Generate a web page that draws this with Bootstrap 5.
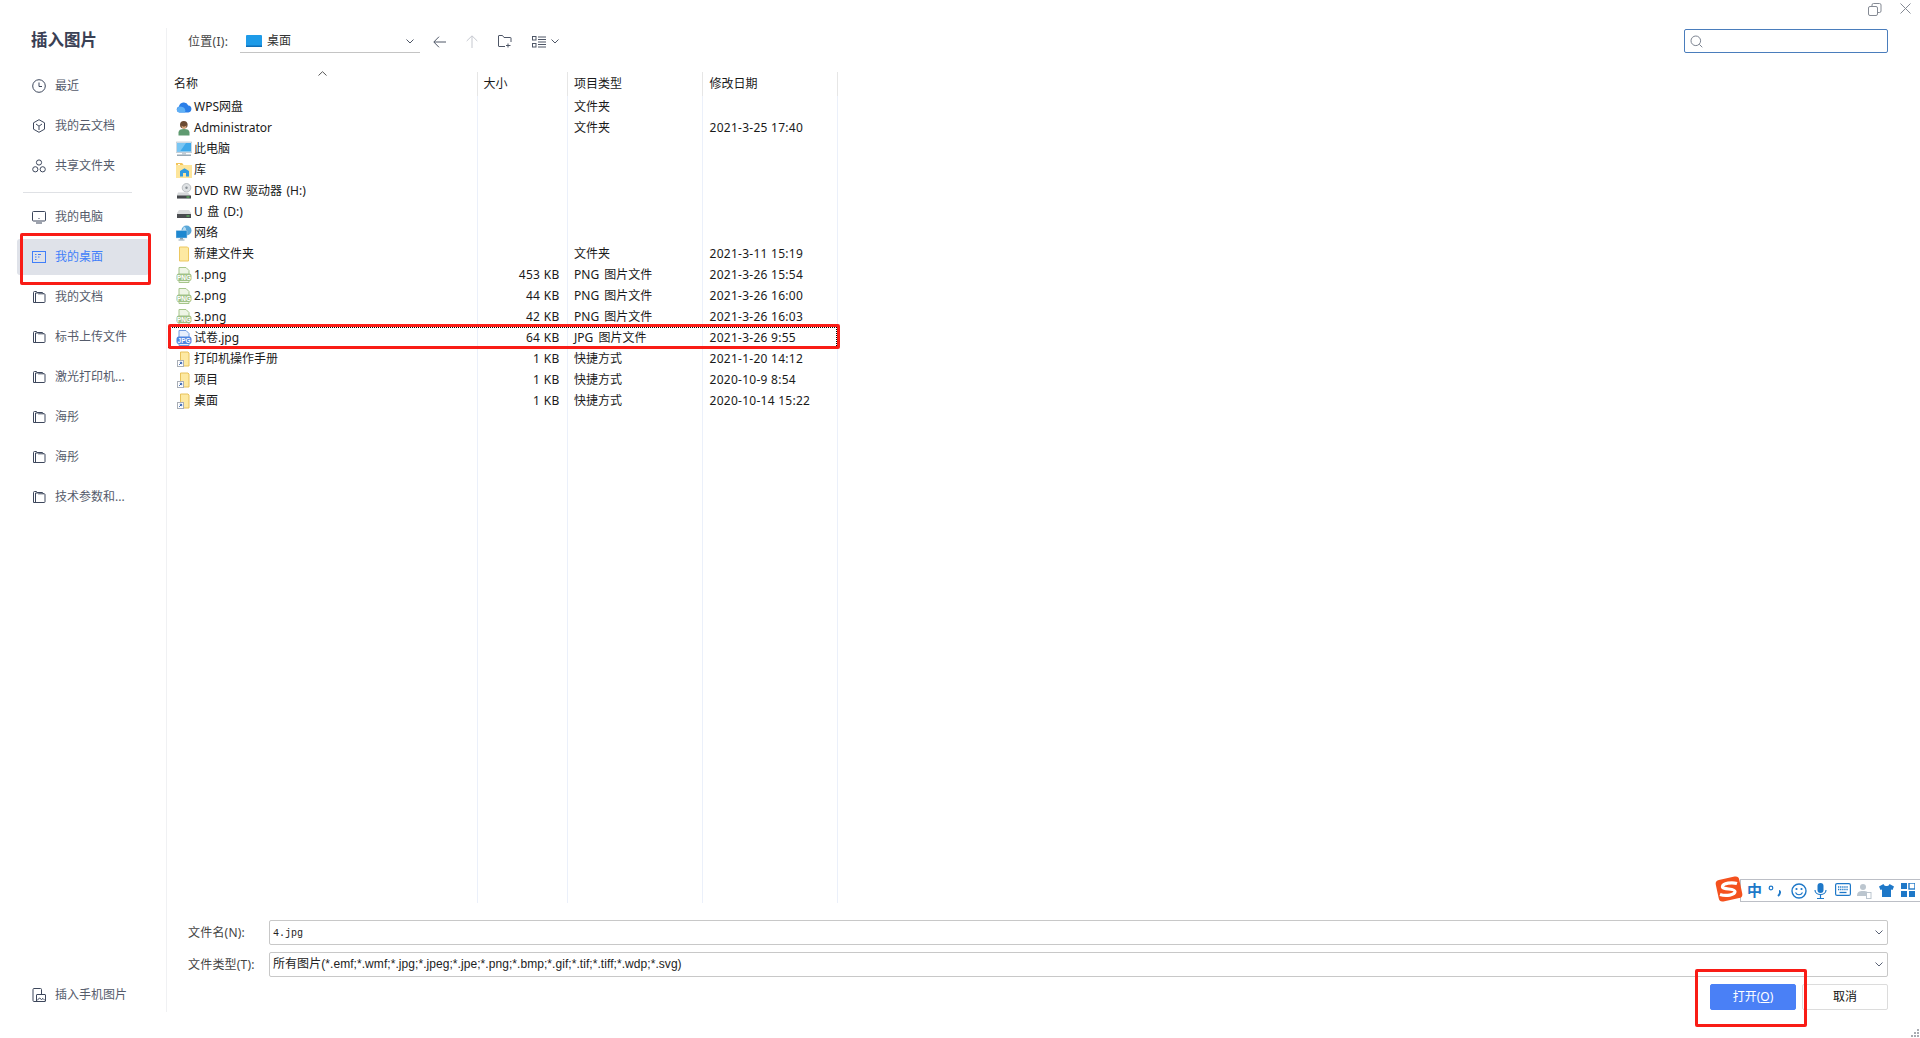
<!DOCTYPE html>
<html lang="zh-CN">
<head>
<meta charset="utf-8">
<title>插入图片</title>
<link rel="stylesheet" href="https://cdn.jsdelivr.net/npm/bootstrap@5.3.0/dist/css/bootstrap.min.css">
<style>
html,body{height:1038px;overflow:hidden}
body{background:#fff;font:12px/1.3 "Noto Sans","Noto Sans CJK SC",sans-serif;color:#1a1a1a}
.dlg{height:1038px;padding:28px 0 26px;position:relative}
.side{width:167px;flex:none;border-right:1px solid #f0f1f3}
.side-title{font-size:16.500px;font-weight:700;line-height:24px;color:#3a4054;padding-left:31px;margin:0 0 16px}
.side-item{height:36px;margin:0 17px 4px;width:132px;padding-left:15px;gap:9px;color:#555b6b;border-radius:3px;text-decoration:none;flex:none}
.side-item svg{width:14px;height:14px;fill:none;stroke:#3d475c;stroke-width:1;flex:none}
.side-item.sel{background:#dfe2e9;color:#417ff9}
.side-item.sel svg{stroke:#417ff9}
.side-item.phone{margin-bottom:-1px}
.side-rule{height:1px;background:#dfe1e5;margin:4px 34px 6px 23px;flex:none}
.main{min-width:0}
.tools{height:25px;padding-top:2px;margin:0 32px 19px 21px;flex:none;color:#444}
.loc-label{width:52px;letter-spacing:.3px}
.loc-box{width:180px;height:23px;border-bottom:1px solid #c4c4c4;padding:0 6px;gap:5px;color:#333}
.tool-ic{fill:none;stroke:#4e5666;stroke-width:1;flex:none}
.search{margin-left:auto;width:204px;height:24px;border:1px solid #4a7dbc;border-radius:2px;padding-left:5px;margin-top:-1px;align-self:flex-start}
.filewrap{height:831px;flex:none;padding-left:1px;position:relative}
.files{width:669px;table-layout:fixed;margin:0;--bs-table-bg:transparent;--bs-table-color:#1a1a1a;font-size:12px}
.files th,.files td{padding:0;font-weight:400;border:0;white-space:nowrap;vertical-align:middle;line-height:21px}
.files th{height:24px;padding-left:7px;border-right:1px solid #e6e6e6;position:relative;line-height:22px}
.files td{height:21px;padding-left:7px;border-right:1px solid #ebf0fa}
.files th:first-child{padding-left:6px}
.files th:nth-child(2){padding-left:6px}
.files th:nth-child(3),.files td:nth-child(3){padding-left:6.500px}
.files td:nth-child(3){word-spacing:2px}
.files td:nth-child(4){letter-spacing:.27px}
.files td:first-child{padding-left:8px}
.files td.sz{text-align:right;padding:0 7px 0 0;letter-spacing:.3px}
.files td.nm>span{display:flex;align-items:center;gap:2px;word-spacing:1.300px}
.files td.nm svg{width:16px;height:16px;flex:none}
.files tr.focusrow{outline:1px dotted #000;outline-offset:-1px}
.files tr.filler td{height:492px}
.sortup{position:absolute;left:150px;top:-1px;width:9px;height:5px;fill:none;stroke:#555;stroke-width:1}
.foot{margin:17px 32px 0 21px;gap:7px;color:#444}
.foot-label{width:81px;flex:none;padding-top:1px;letter-spacing:.2px}
.fld{height:25px;border:1px solid #c8c8c8;border-radius:2px;padding:1px 3px 0;color:#222;flex:1;min-width:0;font-family:"Liberation Sans","Noto Sans CJK SC",sans-serif;letter-spacing:.06px;position:relative;background:#fff}
.fld.mono{font-family:"Liberation Mono",monospace;font-size:10px;letter-spacing:0}
.fld svg{position:absolute;right:4px;top:9px;width:8px;height:5px;fill:none;stroke:#5a6275;stroke-width:1}
.act{height:26px;gap:6px}
.btn-open{--bs-btn-bg:#4a80f6;--bs-btn-border-color:#4a80f6;--bs-btn-color:#fff;--bs-btn-hover-bg:#4a80f6;--bs-btn-hover-color:#fff;--bs-btn-padding-y:0;--bs-btn-padding-x:0;--bs-btn-font-size:12px;--bs-btn-border-radius:2px;width:86px;height:26px}
.btn-no{--bs-btn-bg:#fff;--bs-btn-border-color:#dcdcdc;--bs-btn-color:#111;--bs-btn-padding-y:0;--bs-btn-padding-x:0;--bs-btn-font-size:12px;--bs-btn-border-radius:2px;width:86px;height:26px}
.mark-box{position:absolute;border:3px solid #f91c16;border-radius:2px;pointer-events:none}
.mk-side{left:20px;top:233px;width:131px;height:52px}
.mk-row{left:168px;top:324px;width:672px;height:25px}
.mk-open{left:1695px;top:969px;width:112px;height:58px}
.winbtns{position:absolute;top:3px;right:9px;gap:17px}
.winbtns svg{fill:none;stroke:#858a94;stroke-width:1}
.ime{position:absolute;left:1715px;top:875px;width:205px;height:29px}
.ime-strip{position:absolute;left:25px;top:4px;right:0;height:23px;background:#fff;border:1px solid #bcbfc6;border-right:0}
.ime-strip>*{position:absolute;top:3px}
.ime-zh{font:700 15px/17px "Noto Sans CJK SC",sans-serif;color:#1e78c8;left:6px;top:1px}
.grip{position:absolute;right:1px;bottom:1px;width:8px;height:8px}
</style>
</head>
<body>
<svg width="0" height="0" class="position-absolute">
<defs>
<symbol id="i-folder" viewBox="0 0 14 14"><path d="M1.500 12.500V2.500a1 1 0 0 1 1-1h2l1 1.500v-.5h5l1 1.500M1.500 12.500h10.800a.7.7 0 0 0 .7-.7V4.500a.7.700 0 0 0-.7-.7H6.500L5.500 3H3.500v9.500"/></symbol>
<symbol id="f-folder" viewBox="0 0 16 16"><path d="M3.500 1h8l1 1v13h-9z" fill="#fde9a2" stroke="#edc861"/><path d="M12.500 3v12" stroke="#edc861"/></symbol>
<symbol id="f-short" viewBox="0 0 16 16"><path d="M4.500 1h7.500l1 1v13H4.500z" fill="#fde9a2" stroke="#e8c25a"/><rect x="1.500" y="9.500" width="6" height="6" fill="#fff" stroke="#a9aeb6"/><path d="M3.200 13.800l2.300-2.300M3.800 11.300h1.900v1.900" fill="none" stroke="#2f5fae"/></symbol>
<symbol id="f-png" viewBox="0 0 16 16"><path d="M3 .5h7l3 3V8H3z" fill="#eef5e6" stroke="#a6c58a"/><path d="M3 14v1.500h10V14" fill="#eef5e6" stroke="#a6c58a"/><rect x=".5" y="6.500" width="15" height="7.500" rx="2.500" fill="#9fc187"/><text x="8" y="12.500" text-anchor="middle" font-size="6.400" font-weight="700" fill="#fff" font-family="Liberation Sans,sans-serif">PNG</text></symbol>
<symbol id="f-jpg" viewBox="0 0 16 16"><path d="M3 .5h7l3 3V8H3z" fill="#e7effc" stroke="#6f9ae0"/><path d="M3 14v1.500h10V14" fill="#e7effc" stroke="#6f9ae0"/><rect x=".5" y="6.500" width="15" height="7.500" rx="2.500" fill="#4f86e0"/><text x="8" y="12.500" text-anchor="middle" font-size="6.400" font-weight="700" fill="#fff" font-family="Liberation Sans,sans-serif">JPG</text></symbol>
<symbol id="c-down" viewBox="0 0 8 5"><path d="M.5.500L4 4l3.500-3.500"/></symbol>
</defs>
</svg>

<div class="dlg d-flex">
  <aside class="side d-flex flex-column">
    <h1 class="side-title">插入图片</h1>
    <a class="side-item d-flex align-items-center"><svg viewBox="0 0 14 14"><circle cx="7" cy="7" r="6.300"/><path d="M7 3.500V7.500h3"/></svg>最近</a>
    <a class="side-item d-flex align-items-center"><svg viewBox="0 0 14 14"><path d="M7 .7l5.500 3.100v6.400L7 13.300 1.500 10.200V3.800zM4 5l3 2.200L10 5M7 7.200V11"/></svg>我的云文档</a>
    <a class="side-item d-flex align-items-center"><svg viewBox="0 0 14 14"><circle cx="7" cy="3.500" r="2.600"/><circle cx="3.300" cy="10.300" r="2.600"/><circle cx="10.700" cy="10.300" r="2.600"/></svg>共享文件夹</a>
    <div class="side-rule"></div>
    <a class="side-item d-flex align-items-center"><svg viewBox="0 0 14 14"><rect x=".5" y="1.500" width="13" height="9.500" rx="1"/><path d="M4 13h6M6.500 8.500h1"/></svg>我的电脑</a>
    <a class="side-item sel d-flex align-items-center"><svg viewBox="0 0 14 14"><rect x=".5" y="1.500" width="13" height="11"/><path d="M3 4.500h1.500M6 4.500h3M3 7h1.500M6 7h1.500M3 9.500h1.500"/></svg>我的桌面</a>
    <a class="side-item d-flex align-items-center"><svg><use href="#i-folder"/></svg>我的文档</a>
    <a class="side-item d-flex align-items-center"><svg><use href="#i-folder"/></svg>标书上传文件</a>
    <a class="side-item d-flex align-items-center"><svg><use href="#i-folder"/></svg>激光打印机...</a>
    <a class="side-item d-flex align-items-center"><svg><use href="#i-folder"/></svg>海彤</a>
    <a class="side-item d-flex align-items-center"><svg><use href="#i-folder"/></svg>海彤</a>
    <a class="side-item d-flex align-items-center"><svg><use href="#i-folder"/></svg>技术参数和...</a>
    <a class="side-item phone d-flex align-items-center mt-auto"><svg viewBox="0 0 14 14"><path d="M7.500 13.500H2a1 1 0 0 1-1-1v-11a1 1 0 0 1 1-1h6.500a1 1 0 0 1 1 1V6"/><rect x="4.500" y="6.500" width="9" height="7" rx=".5"/><path d="M5 12.500l2.500-2.500 2 1.500 1.500-1 2 2"/></svg>插入手机图片</a>
  </aside>

  <main class="main flex-grow-1 d-flex flex-column">
    <div class="tools d-flex align-items-center">
      <span class="loc-label">位置(I):</span>
      <div class="loc-box d-flex align-items-center">
        <svg width="16" height="12" viewBox="0 0 16 12"><rect width="16" height="12" rx="1" fill="#1e9be8"/><rect y="10.500" width="16" height="1.500" fill="#0f6fb8"/></svg>
        <span>桌面</span>
        <svg class="tool-ic ms-auto" width="8" height="5"><use href="#c-down"/></svg>
      </div>
      <svg class="tool-ic" style="margin-left:13px" width="13" height="12" viewBox="0 0 13 12"><path d="M13 6H1M6 .7L.8 6 6 11.300"/></svg>
      <svg class="tool-ic" style="margin-left:20px;stroke:#c5c8cf" width="12" height="13" viewBox="0 0 12 13"><path d="M6 13V1M.7 6L6 .8 11.300 6"/></svg>
      <svg class="tool-ic" style="margin-left:20px" width="14" height="13" viewBox="0 0 14 13"><path d="M7 11.500H1a.5.500 0 0 1-.5-.5V1A.5.500 0 0 1 1 .5h3.500l1.500 2h6.500a.5.500 0 0 1 .5.500v4M10 8.500v4M8 10.500h4.500"/></svg>
      <svg class="tool-ic" style="margin-left:20px" width="14" height="12" viewBox="0 0 14 12"><rect x=".5" y=".5" width="3.500" height="3.500"/><rect x=".5" y="7.500" width="3.500" height="3.500"/><path d="M6 1h8M6 3.500h8M6 6h8M6 8.500h8M6 11h8" /></svg>
      <svg class="tool-ic" style="margin-left:5px" width="8" height="5"><use href="#c-down"/></svg>
      <div class="search d-flex align-items-center">
        <svg class="tool-ic" style="stroke:#7d8491" width="13" height="13" viewBox="0 0 13 13"><circle cx="5.800" cy="5.800" r="4.800"/><path d="M9.300 9.300l3 3"/></svg>
      </div>
    </div>

    <div class="filewrap">
      <table class="table files">
        <colgroup><col style="width:309px"><col style="width:90px"><col style="width:135px"><col style="width:135px"></colgroup>
        <thead>
          <tr><th>名称<svg class="sortup" viewBox="0 0 9 5"><path d="M.5 4.500L4.500.700l4 3.800"/></svg></th><th>大小</th><th>项目类型</th><th>修改日期</th></tr>
        </thead>
        <tbody>
          <tr><td class="nm"><span><svg viewBox="0 0 16 16"><path d="M3.500 13.500a3 3 0 0 1-.6-5.900 5 5 0 0 1 9.400-1.200 3.600 3.600 0 0 1 .2 7.100z" fill="#2b7fe8"/><path d="M1 10.500a3 3 0 0 1 4-2.700 4 4 0 0 1 4 5.700H3.500A2.500 2.500 0 0 1 1 10.500z" fill="#5fb0f5"/></svg>WPS网盘</span></td><td></td><td>文件夹</td><td></td></tr>
          <tr><td class="nm"><span><svg viewBox="0 0 16 16"><path d="M2.500 15.500v-3c0-2.500 2-3.500 5.500-3.500s5.500 1 5.500 3.500v3z" fill="#5f9a70"/><circle cx="7.800" cy="4.800" r="3.800" fill="#6a4a32"/><path d="M5.500 5.500c1 1.500 3.500 1.500 5 0-.2 2.300-1.300 3.500-2.500 3.500S5.700 7.800 5.500 5.500z" fill="#d9a77d"/></svg>Administrator</span></td><td></td><td>文件夹</td><td>2021-3-25 17:40</td></tr>
          <tr><td class="nm"><span><svg viewBox="0 0 16 16"><rect y="1" width="16" height="10.500" rx=".5" fill="#dfeaf3" stroke="#98a9b5" stroke-width=".5"/><rect x="1" y="2" width="14" height="8.500" fill="#3fa9ea"/><path d="M1 2h9L4 10.500H1z" fill="#79c6f3"/><path d="M6 11.500h4v2H6z" fill="#c2cdd4"/><rect x="1" y="13.500" width="14" height="1.500" fill="#98a9b5"/></svg>此电脑</span></td><td></td><td></td><td></td></tr>
          <tr><td class="nm"><span><svg viewBox="0 0 16 16"><path d="M0 1h6l1.500 2H16v13H0z" fill="#fde59a"/><path d="M0 1h6l1.500 2H0z" fill="#f2c45a"/><path d="M2 2h2v1H2z" fill="#fff"/><path d="M4 14.500V9L8.500 6.300 13 9v5.500h-3V11H7v3.500z" fill="#2f9ae0"/></svg>库</span></td><td></td><td></td><td></td></tr>
          <tr><td class="nm"><span><svg viewBox="0 0 16 16"><circle cx="10.500" cy="4.800" r="4.300" fill="#dfe2e4" stroke="#9ba0a4" stroke-width=".6"/><circle cx="10.500" cy="4.800" r="1.200" fill="#8a9096"/><path d="M2 9.500h10l2 2.500v3.500H1V12z" fill="#d6d8da"/><rect x="1" y="12.500" width="14" height="3" fill="#45484c"/><rect x="10.500" y="13.500" width="3" height="1" fill="#5fd45f"/></svg>DVD RW 驱动器 (H:)</span></td><td></td><td></td><td></td></tr>
          <tr><td class="nm"><span><svg viewBox="0 0 16 16"><path d="M3 6h10l2 3v1H1V9z" fill="#dcdedf"/><rect x="1" y="10" width="14" height="4" fill="#4a4d50"/><rect x="10.500" y="11.500" width="3" height="1" fill="#5fd45f"/></svg>U 盘 (D:)</span></td><td></td><td></td><td></td></tr>
          <tr><td class="nm"><span><svg viewBox="0 0 16 16"><circle cx="10.500" cy="5.500" r="5" fill="#5aa7d8"/><path d="M8 1.500c2 1 3 3 1 5s-2 .5-3-.5z" fill="#b7dcf2"/><rect y="5.500" width="11" height="7.500" rx=".5" fill="#1e88d0" stroke="#bcd6e8" stroke-width=".5"/><path d="M4 13h3v1.500H4z" fill="#8aa2b2"/><path d="M2.500 14.500h6v1h-6z" fill="#8aa2b2"/></svg>网络</span></td><td></td><td></td><td></td></tr>
          <tr><td class="nm"><span><svg><use href="#f-folder"/></svg>新建文件夹</span></td><td></td><td>文件夹</td><td>2021-3-11 15:19</td></tr>
          <tr><td class="nm"><span><svg><use href="#f-png"/></svg>1.png</span></td><td class="sz">453 KB</td><td>PNG 图片文件</td><td>2021-3-26 15:54</td></tr>
          <tr><td class="nm"><span><svg><use href="#f-png"/></svg>2.png</span></td><td class="sz">44 KB</td><td>PNG 图片文件</td><td>2021-3-26 16:00</td></tr>
          <tr><td class="nm"><span><svg><use href="#f-png"/></svg>3.png</span></td><td class="sz">42 KB</td><td>PNG 图片文件</td><td>2021-3-26 16:03</td></tr>
          <tr class="focusrow"><td class="nm"><span><svg><use href="#f-jpg"/></svg>试卷.jpg</span></td><td class="sz">64 KB</td><td>JPG 图片文件</td><td>2021-3-26 9:55</td></tr>
          <tr><td class="nm"><span><svg><use href="#f-short"/></svg>打印机操作手册</span></td><td class="sz">1 KB</td><td>快捷方式</td><td>2021-1-20 14:12</td></tr>
          <tr><td class="nm"><span><svg><use href="#f-short"/></svg>项目</span></td><td class="sz">1 KB</td><td>快捷方式</td><td>2020-10-9 8:54</td></tr>
          <tr><td class="nm"><span><svg><use href="#f-short"/></svg>桌面</span></td><td class="sz">1 KB</td><td>快捷方式</td><td>2020-10-14 15:22</td></tr>
          <tr class="filler"><td></td><td></td><td></td><td></td></tr>
        </tbody>
      </table>
    </div>

    <div class="foot d-flex flex-column">
      <div class="d-flex align-items-center"><span class="foot-label">文件名(N):</span><div class="fld mono d-flex align-items-center">4.jpg<svg><use href="#c-down"/></svg></div></div>
      <div class="d-flex align-items-center"><span class="foot-label">文件类型(T):</span><div class="fld d-flex align-items-center">所有图片(*.emf;*.wmf;*.jpg;*.jpeg;*.jpe;*.png;*.bmp;*.gif;*.tif;*.tiff;*.wdp;*.svg)<svg><use href="#c-down"/></svg></div></div>
      <div class="act d-flex justify-content-end">
        <button class="btn btn-open" type="button">打开(<u>O</u>)</button>
        <button class="btn btn-no" type="button">取消</button>
      </div>
    </div>
  </main>

  <div class="winbtns d-flex align-items-start">
    <svg width="15" height="13" viewBox="0 0 15 13"><rect x=".5" y="3.500" width="9" height="9" rx="1.500"/><path d="M4 3.500V2A1.500 1.500 0 0 1 5.500.5h6A1.500 1.500 0 0 1 13 2v6a1.500 1.500 0 0 1-1.500 1.500H10"/></svg>
    <svg width="11" height="11" viewBox="0 0 11 11"><path d="M.5.500l10 10M10.500.500l-10 10"/></svg>
  </div>

  <div class="ime">
    <div class="ime-strip">
      <span class="ime-zh">中</span>
      <svg style="left:27px" width="14" height="16" viewBox="0 0 14 16"><circle cx="3" cy="5" r="1.800" fill="none" stroke="#1e78c8" stroke-width="1.200"/><path d="M11 8c1.500 0 1.500 3-1 5" fill="none" stroke="#1e78c8" stroke-width="2"/></svg>
      <svg style="left:50px" width="16" height="16" viewBox="0 0 16 16"><circle cx="8" cy="8" r="7" fill="none" stroke="#1e78c8" stroke-width="1.400"/><circle cx="5.500" cy="6" r="1.100" fill="#1e78c8"/><circle cx="10.500" cy="6" r="1.100" fill="#1e78c8"/><path d="M4.500 9.500c1.500 3 5.500 3 7 0" fill="none" stroke="#1e78c8" stroke-width="1.200"/></svg>
      <svg style="left:73px" width="13" height="16" viewBox="0 0 13 16"><rect x="3.500" y="0" width="6" height="10" rx="3" fill="#1e78c8"/><path d="M1 7c0 6 11 6 11 0M6.500 12v3M3 15.500h7" fill="none" stroke="#1e78c8" stroke-width="1.200"/></svg>
      <svg style="left:94px" width="16" height="14" viewBox="0 0 16 14"><rect x=".6" y=".6" width="14.800" height="11.800" rx="1.500" fill="none" stroke="#1e78c8" stroke-width="1.200"/><path d="M3 4h10M3 6.500h10" stroke="#1e78c8" stroke-width="1.300" stroke-dasharray="1.300 .8"/><path d="M4.500 9.500h7" stroke="#1e78c8" stroke-width="1.300"/></svg>
      <svg style="left:116px" width="15" height="16" viewBox="0 0 15 16"><circle cx="6" cy="4" r="3" fill="#bcc6cf"/><path d="M0 13c0-4 2-5 6-5s6 1 6 5z" fill="#bcc6cf"/><rect x="9.500" y="9.500" width="4.500" height="6" fill="#fff" stroke="#bcc6cf"/></svg>
      <svg style="left:138px" width="15" height="15" viewBox="0 0 15 15"><path d="M4.500 1L0 3.500l1.500 3.500 1.500-.5V14h9V6.500l1.500.5L15 3.500 10.500 1c-.5 2-2.500 2-3 2s-2.500 0-3-2z" fill="#1e78c8"/></svg>
      <svg style="left:160px" width="14" height="14" viewBox="0 0 14 14"><rect width="6" height="6" fill="#1e78c8"/><rect x="8" width="6" height="6" fill="none" stroke="#1e78c8" stroke-width="1.400"/><rect y="8" width="6" height="6" fill="#1e78c8"/><rect x="8" y="8" width="6" height="6" fill="#1e78c8"/></svg>
    </div>
    <svg class="position-absolute" style="left:0;top:0" width="29" height="29" viewBox="0 0 29 29"><rect x="2" y="3" width="24" height="22" rx="4" transform="rotate(-12 14 14)" fill="#f4511e"/><path d="M22 8.500C17 7 8 8 7.500 11.500S20 13 20 16.500 11 21.500 5 19.500" fill="none" stroke="#fff" stroke-width="3.200"/></svg>
  </div>

  <svg class="grip" viewBox="0 0 8 8" fill="#a9acb2"><rect x="6" y="0" width="2" height="2"/><rect x="3" y="3" width="2" height="2"/><rect x="6" y="3" width="2" height="2"/><rect x="0" y="6" width="2" height="2"/><rect x="3" y="6" width="2" height="2"/><rect x="6" y="6" width="2" height="2"/></svg>

  <div class="mark-box mk-side"></div>
  <div class="mark-box mk-row"></div>
  <div class="mark-box mk-open"></div>
</div>
<script src="https://cdn.jsdelivr.net/npm/bootstrap@5.3.0/dist/js/bootstrap.bundle.min.js"></script>
</body>
</html>
